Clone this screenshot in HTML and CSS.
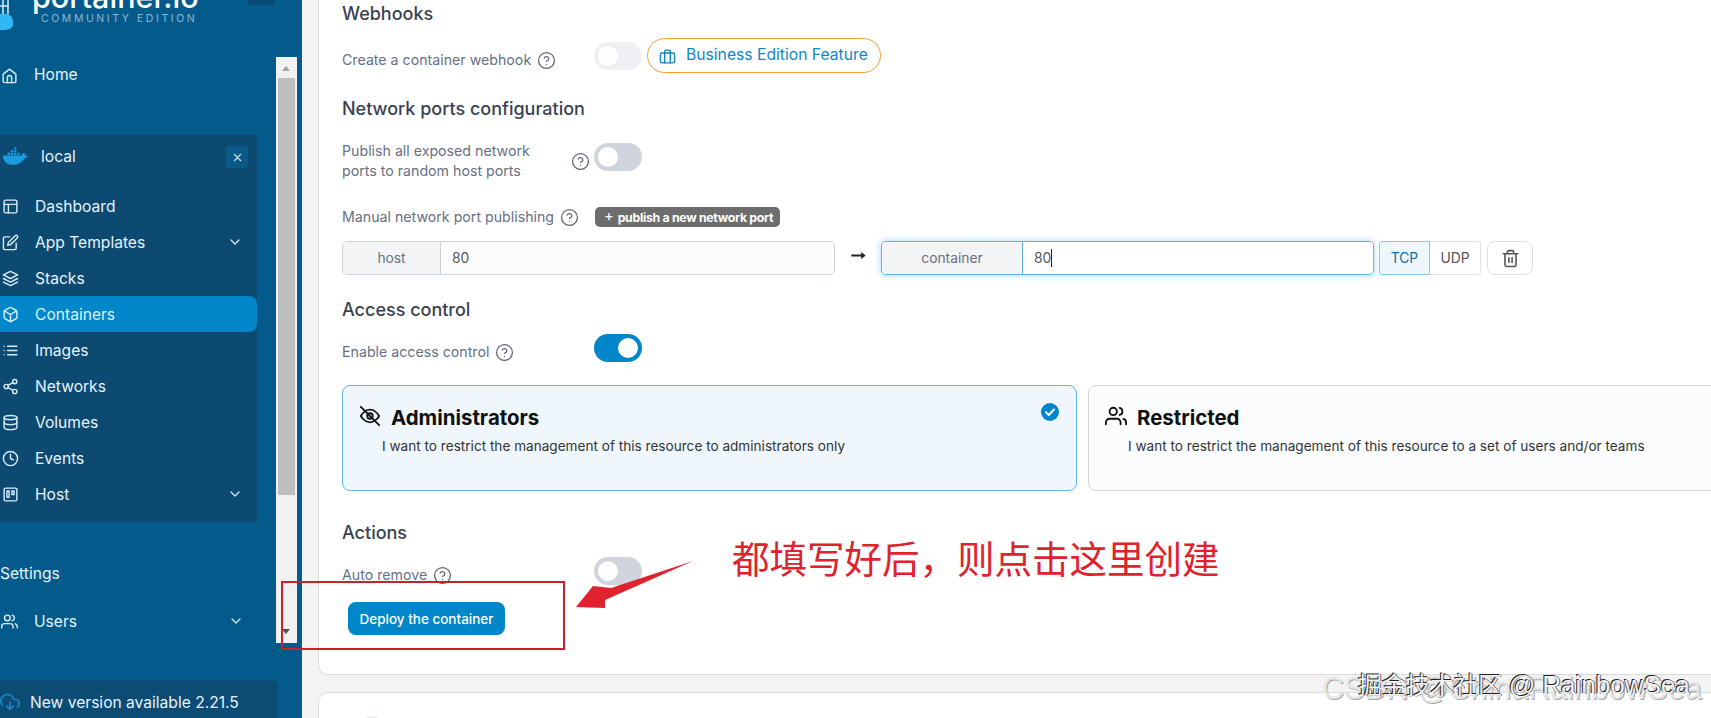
FILE: index.html
```html
<!DOCTYPE html>
<html lang="en">
<head>
<meta charset="utf-8">
<title>Portainer - Create container</title>
<link rel="stylesheet" href="styles.css">
</head>
<body>
<svg class="sprite" aria-hidden="true">
  <symbol id="i-home" viewBox="0 0 24 24"><path d="M3 10l9-7 9 7v10a2 2 0 0 1-2 2H5a2 2 0 0 1-2-2z"/><path d="M9 22v-7a3 3 0 0 1 6 0v7"/></symbol>
  <symbol id="i-layout" viewBox="0 0 24 24"><rect x="3" y="3" width="18" height="18" rx="2"/><path d="M3 9h18M9 21V9"/></symbol>
  <symbol id="i-edit" viewBox="0 0 24 24"><path d="M11 4H4a2 2 0 0 0-2 2v14a2 2 0 0 0 2 2h14a2 2 0 0 0 2-2v-7"/><path d="M18.5 2.5a2.121 2.121 0 0 1 3 3L12 15l-4 1 1-4z"/></symbol>
  <symbol id="i-layers" viewBox="0 0 24 24"><path d="M12 2L2 7l10 5 10-5z"/><path d="M2 17l10 5 10-5"/><path d="M2 12l10 5 10-5"/></symbol>
  <symbol id="i-box" viewBox="0 0 24 24"><path d="M21 16V8a2 2 0 0 0-1-1.73l-7-4a2 2 0 0 0-2 0l-7 4A2 2 0 0 0 3 8v8a2 2 0 0 0 1 1.73l7 4a2 2 0 0 0 2 0l7-4A2 2 0 0 0 21 16z"/><path d="M3.27 6.96L12 12.01l8.73-5.05M12 22.08V12"/></symbol>
  <symbol id="i-list" viewBox="0 0 24 24"><path d="M8 6h13M8 12h13M8 18h13M3 6h.01M3 12h.01M3 18h.01"/></symbol>
  <symbol id="i-share" viewBox="0 0 24 24"><circle cx="18" cy="5" r="3"/><circle cx="6" cy="12" r="3"/><circle cx="18" cy="19" r="3"/><path d="M8.59 13.51l6.83 3.98M15.41 6.51l-6.82 3.98"/></symbol>
  <symbol id="i-db" viewBox="0 0 24 24"><ellipse cx="12" cy="5" rx="9" ry="3"/><path d="M21 12c0 1.66-4 3-9 3s-9-1.34-9-3"/><path d="M3 5v14c0 1.66 4 3 9 3s9-1.34 9-3V5"/></symbol>
  <symbol id="i-clock" viewBox="0 0 24 24"><circle cx="12" cy="12" r="10"/><path d="M12 6v6l4 2"/></symbol>
  <symbol id="i-host" viewBox="0 0 24 24"><rect x="3" y="3" width="18" height="18" rx="2"/><rect x="7" y="7" width="3" height="9"/><rect x="14" y="7" width="3" height="5"/></symbol>
  <symbol id="i-users" viewBox="0 0 24 24"><path d="M17 21v-2a4 4 0 0 0-4-4H5a4 4 0 0 0-4 4v2"/><circle cx="9" cy="7" r="4"/><path d="M23 21v-2a4 4 0 0 0-3-3.87M16 3.13a4 4 0 0 1 0 7.75"/></symbol>
  <symbol id="i-chev" viewBox="0 0 24 24"><path d="M6 9l6 6 6-6"/></symbol>
  <symbol id="i-x" viewBox="0 0 24 24"><path d="M18 6L6 18M6 6l12 12"/></symbol>
  <symbol id="i-cloud" viewBox="0 0 24 24"><path d="M8 17l4 4 4-4M12 12v9"/><path d="M20.88 18.09A5 5 0 0 0 18 9h-1.26A8 8 0 1 0 3 16.29"/></symbol>
  <symbol id="i-help" viewBox="0 0 24 24"><circle cx="12" cy="12" r="10"/><path d="M9.09 9a3 3 0 0 1 5.83 1c0 2-3 3-3 3M12 17h.01"/></symbol>
  <symbol id="i-brief" viewBox="0 0 24 24"><rect x="2" y="7" width="20" height="14" rx="2"/><path d="M16 21V5a2 2 0 0 0-2-2h-4a2 2 0 0 0-2 2v16"/></symbol>
  <symbol id="i-trash" viewBox="0 0 24 24"><path d="M3 6h18M19 6v14a2 2 0 0 1-2 2H7a2 2 0 0 1-2-2V6m3 0V4a2 2 0 0 1 2-2h4a2 2 0 0 1 2 2v2M10 11v6M14 11v6"/></symbol>
  <symbol id="i-eyeoff" viewBox="0 0 24 24"><path d="M2 12s4-7 10-7 10 7 10 7-4 7-10 7-10-7-10-7z"/><circle cx="12" cy="12" r="3"/><path d="M2 2l20 20"/></symbol>
</svg>

<div class="page">
  <aside class="side">
    <div class="brand">
      <svg class="brand-mark" viewBox="0 0 14 32"><path class="mark-blob" d="M0 14h8l3 2 2 4v6l-3 3-5 1H0z"/><path class="mark-line" d="M3 0v14M8 0v14M0 6h9"/></svg>
      <div class="brand-name">portainer.io</div>
      <div class="brand-sub">COMMUNITY EDITION</div>
      <span class="brand-toggle"></span>
    </div>

    <a class="nav-row nav-home"><svg class="ico"><use href="#i-home"/></svg><span>Home</span></a>

    <section class="env">
      <div class="env-head">
        <svg class="whale" viewBox="0 0 28 20"><path d="M1 9h20c1-2 2-3 3-3 1 1 1 2 1 3 1 0 2 0 3 .5-1 1.500-2 2-3.500 2C22 16 18 19 11 19 5 19 1 15 1 9z"/><path d="M6 6h2.500v2.500H6zM9.500 6H12v2.500H9.500zM13 6h2.500v2.500H13zM9.500 3H12v2.300H9.500zM13 3h2.500v2.300H13zM13 0h2.500v2.300H13zM16.500 6H19v2.500h-2.500z"/></svg>
        <span class="env-name">local</span>
        <span class="env-close"><svg class="ico-x"><use href="#i-x"/></svg></span>
      </div>
      <a class="nav-row"><svg class="ico"><use href="#i-layout"/></svg><span>Dashboard</span></a>
      <a class="nav-row"><svg class="ico"><use href="#i-edit"/></svg><span>App Templates</span><svg class="chev"><use href="#i-chev"/></svg></a>
      <a class="nav-row"><svg class="ico"><use href="#i-layers"/></svg><span>Stacks</span></a>
      <a class="nav-row is-active"><svg class="ico"><use href="#i-box"/></svg><span>Containers</span></a>
      <a class="nav-row"><svg class="ico"><use href="#i-list"/></svg><span>Images</span></a>
      <a class="nav-row"><svg class="ico"><use href="#i-share"/></svg><span>Networks</span></a>
      <a class="nav-row"><svg class="ico"><use href="#i-db"/></svg><span>Volumes</span></a>
      <a class="nav-row"><svg class="ico"><use href="#i-clock"/></svg><span>Events</span></a>
      <a class="nav-row"><svg class="ico"><use href="#i-host"/></svg><span>Host</span><svg class="chev"><use href="#i-chev"/></svg></a>
    </section>

    <div class="side-title">Settings</div>
    <a class="nav-row nav-users"><svg class="ico"><use href="#i-users"/></svg><span>Users</span><svg class="chev"><use href="#i-chev"/></svg></a>

    <div class="update"><svg class="ico-cloud"><use href="#i-cloud"/></svg><span>New version available 2.21.5</span></div>

    <div class="scrollbar">
      <span class="sb-up"></span>
      <span class="sb-thumb"></span>
      <span class="sb-down"></span>
    </div>
  </aside>

  <main class="main">
    <div class="card">
      <h2 class="heading heading-first">Webhooks</h2>
      <div class="row row-webhook">
        <div class="label-col label-low"><span>Create a container webhook</span><svg class="help"><use href="#i-help"/></svg></div>
        <span class="switch is-faded"><i></i></span>
        <span class="be-pill"><svg class="be-ico"><use href="#i-brief"/></svg>Business Edition Feature</span>
      </div>

      <h2 class="heading heading-net">Network ports configuration</h2>
      <div class="row row-publish">
        <div class="label-col label-split"><span class="label-wrap">Publish all exposed network ports to random host ports</span><svg class="help"><use href="#i-help"/></svg></div>
        <span class="switch"><i></i></span>
      </div>
      <div class="row row-manual">
        <div class="label-col"><span>Manual network port publishing</span><svg class="help"><use href="#i-help"/></svg></div>
        <span class="badge"><b class="badge-plus">+</b> publish a new network port</span>
      </div>
      <div class="row row-ports">
        <div class="group"><span class="addon">host</span><span class="field">80</span></div>
        <span class="arrow"><svg class="arrow-ico" viewBox="0 0 16 10"><path d="M0 4h11V1l5 4-5 4V6H0z"/></svg></span>
        <div class="group is-focus"><span class="addon addon-c">container</span><span class="field">80<i class="caret"></i></span></div>
        <div class="proto"><span class="proto-on">TCP</span><span>UDP</span></div>
        <span class="trash"><svg class="trash-ico"><use href="#i-trash"/></svg></span>
      </div>

      <h2 class="heading heading-access">Access control</h2>
      <div class="row row-access">
        <div class="label-col label-top"><span>Enable access control</span><svg class="help"><use href="#i-help"/></svg></div>
        <span class="switch is-on"><i></i></span>
      </div>
      <div class="choices">
        <div class="choice is-picked">
          <div class="choice-title"><svg class="choice-ico"><use href="#i-eyeoff"/></svg>Administrators</div>
          <p class="choice-text">I want to restrict the management of this resource to administrators only</p>
          <svg class="tick" viewBox="0 0 18 18"><circle cx="9" cy="9" r="9"/><path d="M5 9.300l2.800 2.700L13 6.500"/></svg>
        </div>
        <div class="choice">
          <div class="choice-title"><svg class="choice-ico"><use href="#i-users"/></svg>Restricted</div>
          <p class="choice-text">I want to restrict the management of this resource to a set of users and/or teams</p>
        </div>
      </div>

      <h2 class="heading heading-actions">Actions</h2>
      <div class="row row-auto">
        <div class="label-col label-top"><span>Auto remove</span><svg class="help"><use href="#i-help"/></svg></div>
        <span class="switch"><i></i></span>
      </div>
      <button class="deploy">Deploy the container</button>
    </div>

    <div class="card card-next"><span class="next-ico"></span></div>
  </main>

  <div class="red-box"></div>
  <svg class="red-arrow" viewBox="0 0 120 50"><path d="M118 1L36 28l-18-2L1 47l29 1 0-8z"/></svg>
  <div class="red-note">都填写好后，则点击这里创建</div>
  <div class="mark-csdn">CSDN @ChinaRainbowSea</div>
  <div class="mark-juejin">掘金技术社区 <span class="mark-latin">@ RainbowSea</span></div>
</div>
</body>
</html>
```
FILE: styles.css
```css
* { box-sizing: border-box; }
html, body { margin: 0; height: 718px; overflow: hidden; }
body { font-family: Inter, "Noto Sans", sans-serif; background: #f3f3f3; color: #333; }
.sprite { position: absolute; width: 0; height: 0; }
svg use { fill: none; stroke: currentColor; stroke-width: 2; stroke-linecap: round; stroke-linejoin: round; }

.page { position: relative; display: flex; width: 1711px; height: 718px; overflow: hidden; }

/* sidebar */
.side { position: relative; flex: 0 0 302px; background: #045b8b; color: #e6f3fb; font-size: 15.6px; }
.brand { position: relative; height: 57px; }
.brand-mark { position: absolute; left: 0; top: 0; width: 14px; height: 32px; }
.mark-blob { fill: #2fb8f5; }
.mark-line { fill: none; stroke: #cfeefc; stroke-width: 1.500; }
.brand-name { position: absolute; left: 32px; top: -25px; font: 500 30.500px/44px Inter, sans-serif; color: #fff; white-space: nowrap; }
.brand-sub { position: absolute; left: 41px; top: 13px; font: 400 10.500px/12px Inter, sans-serif; letter-spacing: 2.570px; color: #8db4d2; white-space: nowrap; }
.brand-toggle { position: absolute; left: 248px; top: 0; width: 27px; height: 5px; background: #0b4a74; border-radius: 0 0 3px 3px; }

.nav-row { display: flex; align-items: center; height: 36px; padding: 0 14px 0 2px; gap: 16px; width: 257px; color: inherit; }
.nav-home { padding-left: 1px; margin-bottom: 42px; }
.nav-home span { margin-top: -2px; }
.ico { width: 17px; height: 17px; flex: none; color: #d8ecf8; }
.chev { width: 16px; height: 16px; margin-left: auto; color: #cfe4f2; }
.env { width: 257px; padding-bottom: 10px; background: #0c4a72; }
.env-head { display: flex; align-items: center; height: 53px; padding: 0 9px 11px 2px; }
.whale { width: 26px; height: 19px; fill: #1b9be0; }
.env-name { margin-left: 13px; }
.env-close { display: flex; align-items: center; justify-content: center; width: 22px; height: 22px; margin: 2px 0 0 auto; background: #0a5a88; border-radius: 3px; }
.ico-x { width: 13px; height: 13px; color: #cfe4f2; }
.is-active { background: #0086c9; border-radius: 0 8px 8px 0; color: #d6f3ff; }
.is-active .ico { color: #d6f3ff; }
.side-title { margin-top: 40px; line-height: 24px; }
.nav-users { margin-top: 17px; padding-left: 1px; padding-right: 13px; }
.update { display: flex; align-items: center; gap: 10px; width: 278px; height: 60px; margin-top: 41px; padding: 0 0 16px 0; background: #0b4b74; border-radius: 0 6px 0 0; white-space: nowrap; }
.ico-cloud { width: 20px; height: 20px; color: #1b86c4; flex: none; }

.scrollbar { position: absolute; left: 276px; top: 57px; width: 21px; height: 586px; background: #f1f1f1; }
.sb-thumb { position: absolute; left: 2px; top: 21px; width: 17px; height: 417px; background: #bebebe; }
.sb-up, .sb-down { position: absolute; left: 6px; width: 0; height: 0; border-left: 4.500px solid transparent; border-right: 4.500px solid transparent; }
.sb-up { top: 9px; border-bottom: 5px solid #a3a3a3; }
.sb-down { bottom: 9px; border-top: 5px solid #505050; }

/* main */
.main { flex: 1; min-width: 0; padding-left: 16px; }
.card { position: relative; width: 1440px; height: 675px; padding: 0 0 0 23px; background: #fff; border: 1px solid #dcdcdc; border-top: 0; border-radius: 0 0 10px 10px; }
.card-next { height: 60px; margin-top: 17px; border-top: 1px solid #dcdcdc; border-radius: 10px 10px 0 0; }
.next-ico { display: block; width: 24px; height: 24px; margin: 23px 0 0 18px; border-radius: 50%; background: #e6eef3; }

.heading { margin: 0; font-size: 18px; font-weight: 500; line-height: 24px; color: #3a4252; }
.heading-first { padding-top: 2px; height: 26px; }
.heading-net { margin-top: 24px; }
.heading-access { margin-top: 23px; }
.heading-actions { margin-top: 30px; }

.row { display: flex; align-items: flex-start; }
.label-col { display: flex; align-items: center; gap: 6px; flex: 0 0 252px; font-size: 14.200px; line-height: 20px; color: #667085; }
.label-top { padding-top: 8px; }
.label-low { padding-top: 12px; }
.label-split { justify-content: space-between; padding-right: 4px; }
.label-wrap { width: 215px; }
.help { width: 19px; height: 19px; flex: none; color: #5c6470; }
.help use { stroke-width: 1.600; }

.switch { position: relative; display: block; flex: none; width: 48px; height: 28px; border-radius: 14px; background: #d0d5dd; }
.switch i { position: absolute; left: 4px; top: 4px; width: 20px; height: 20px; border-radius: 50%; background: #fff; }
.is-faded { opacity: .35; }
.is-on { background: #0086c9; }
.is-on i { left: 24px; }

.row-webhook { margin-top: 12px; height: 35px; }
.row-webhook .switch { margin-top: 4px; }
.be-pill { display: flex; align-items: center; width: 234px; height: 35px; margin-left: 5px; padding: 0 0 3px 11px; border: 1px solid #f0a12e; border-radius: 18px; color: #1186c4; font-size: 15.700px; white-space: nowrap; }
.be-ico { width: 17px; height: 17px; margin: 5px 10px 0 0; flex: none; color: #1186c4; }

.row-publish { margin-top: 20px; }
.row-publish .switch { margin-top: 2px; }
.row-manual { margin-top: 24px; align-items: center; height: 24px; }
.badge { display: flex; align-items: center; gap: 4px; height: 20px; margin-left: 1px; padding: 0 7px 0 9px; background: #6d6d6d; border-radius: 5px; color: #fff; font-size: 12.300px; font-weight: 700; letter-spacing: -.3px; white-space: nowrap; }
.badge-plus { font-weight: 400; font-size: 15px; margin-top: -4px; }

.row-ports { margin-top: 12px; align-items: stretch; height: 34px; font-size: 13.800px; }
.group { display: flex; flex: 0 0 493px; background: #fff; border: 1px solid #cfd2d6; border-radius: 5px; color: #555; }
.addon { display: flex; align-items: center; justify-content: center; flex: 0 0 98px; background: #f3f4f6; border-right: 1px solid #cfd2d6; border-radius: 4px 0 0 4px; color: #667085; }
.addon-c { flex-basis: 141px; }
.field { display: flex; align-items: center; flex: 1; padding-left: 11px; background: #fbfcfd; border-radius: 0 4px 4px 0; color: #555; }
.arrow { display: flex; justify-content: center; flex: 0 0 46px; padding-top: 10px; }
.arrow-ico { width: 15px; height: 9px; fill: #222; }
.is-focus { border-color: #5fb2e4; box-shadow: 0 0 6px 1px rgba(120, 195, 240, .55); }
.is-focus .addon { border-right-color: #5fb2e4; }
.is-focus .field { background: #fff; }
.caret { width: 1px; height: 18px; background: #222; }
.proto { display: flex; margin-left: 5px; font-size: 13.800px; color: #555; }
.proto span { display: flex; align-items: center; justify-content: center; width: 51px; border: 1px solid #e0e2e6; border-left: 0; border-radius: 0 3px 3px 0; }
.proto .proto-on { border: 1px solid #86c8ec; background: #eff7fd; color: #0b6fa8; border-radius: 3px 0 0 3px; }
.trash { display: flex; align-items: center; justify-content: center; width: 46px; margin-left: 6px; border: 1px solid #dcdfe3; border-radius: 8px; }
.trash-ico { width: 19px; height: 19px; color: #555; }

.row-access { margin-top: 12px; }
.choices { display: flex; gap: 11px; margin-top: 23px; }
.choice { position: relative; flex: 0 0 735px; height: 106px; padding: 18px 0 0 16px; background: #fbfcfd; border: 1px solid #d3d5d8; border-radius: 8px; }
.is-picked { background: #eff7fd; border-color: #5cb8e6; }
.choice-title { display: flex; align-items: center; gap: 10px; font-size: 20.400px; font-weight: 700; line-height: 28px; color: #111; }
.choice-ico { width: 22px; height: 22px; color: #111; flex: none; margin-top: -5px; }
.choice-text { margin: 4px 0 0 23px; font-size: 13.600px; line-height: 20px; color: #333; }
.tick { position: absolute; right: 17px; top: 17px; width: 18px; height: 18px; }
.tick circle { fill: #0086c9; }
.tick path { fill: none; stroke: #fff; stroke-width: 2; stroke-linecap: round; stroke-linejoin: round; }

.row-auto { margin-top: 12px; }
.deploy { display: block; width: 157px; height: 33px; margin: 17px 0 0 6px; padding: 0; background: #0086c9; border: 0; border-radius: 8px; color: #fff; font: 500 13.500px Inter, sans-serif; }

/* annotations lying over the page */
.red-box { position: absolute; left: 281px; top: 581px; width: 284px; height: 69px; border: 2px solid #c8202c; }
.red-arrow { position: absolute; left: 575px; top: 560px; width: 120px; height: 50px; fill: #e0222e; }
.red-note { position: absolute; left: 732px; top: 529px; font: 400 37.500px/56px "Noto Sans CJK SC", sans-serif; color: #e0222e; white-space: nowrap; }
.mark-csdn { position: absolute; left: 1322px; top: 670px; font: 400 30.600px/36px "Liberation Sans", sans-serif; color: #e6e6e6; text-shadow: 1px 1px 0 #a8a8a8; white-space: nowrap; }
.mark-juejin { position: absolute; left: 1358px; top: 669px; font: 400 24px/32px "Liberation Sans", "Noto Sans CJK SC", sans-serif; color: #f2f2f2; text-shadow: -1px -1px 0 #222, 1px 0 0 #666; white-space: nowrap; }
.mark-latin { font-size: 26px; }
```
